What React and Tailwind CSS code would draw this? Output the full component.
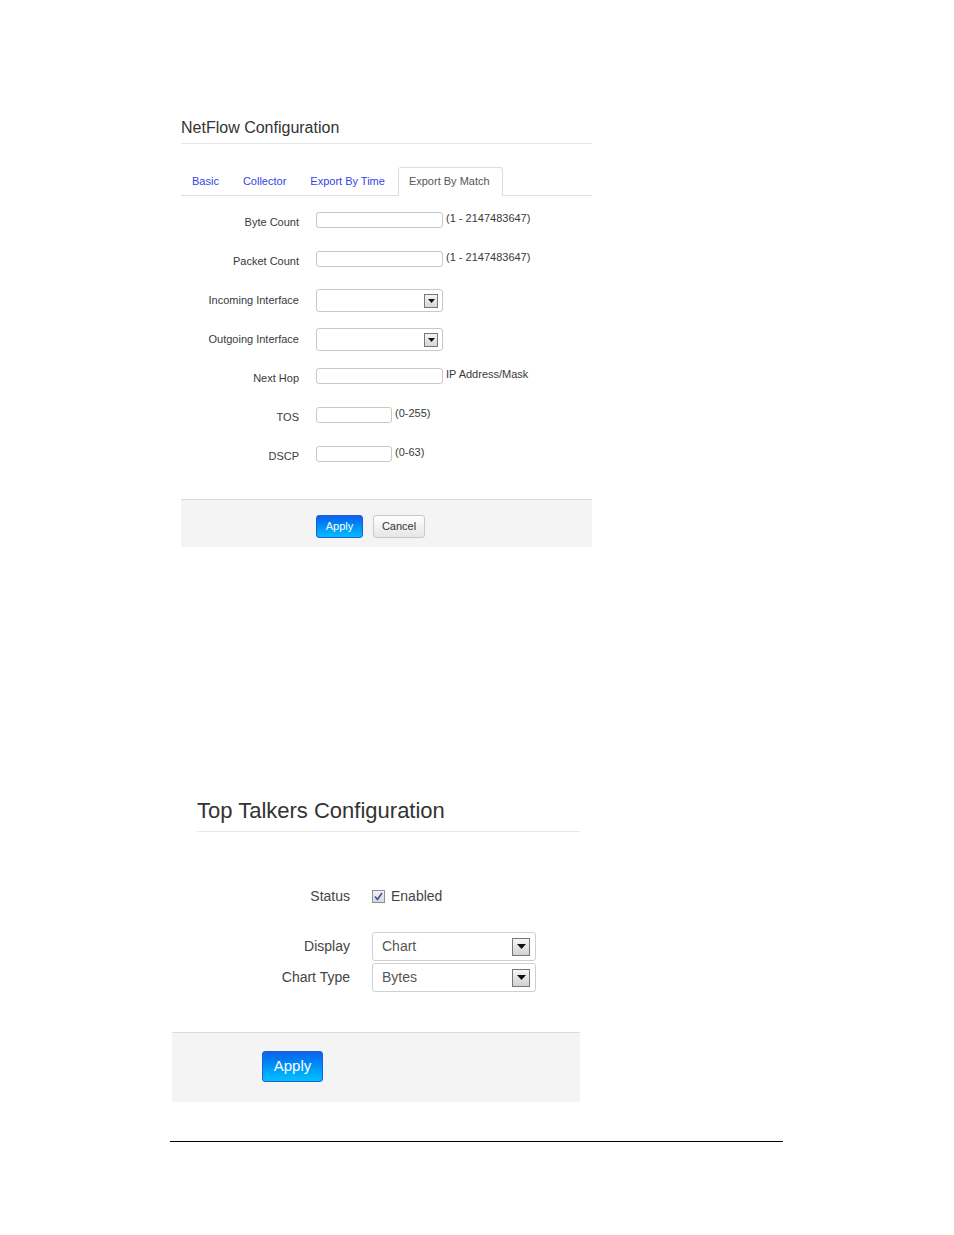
import React from "react";

const font = { fontFamily: '"Liberation Sans", Arial, Helvetica, sans-serif' };

function SmallArrow({ cls }) {
  return (
    <div className={cls}>
      <svg width="7" height="4" viewBox="0 0 7 4">
        <path d="M0 0 L7 0 L3.5 4 Z" fill="#111" />
      </svg>
    </div>
  );
}

function Row({ label, children }) {
  return (
    <div className="flex h-[39px] items-start">
      <div className="w-[118px] shrink-0 text-right text-[11px] leading-[16px] text-[#3a3a3a] mt-[4px]">{label}</div>
      <div className="ml-[17px] flex items-start">{children}</div>
    </div>
  );
}

function TextInput({ wide = true }) {
  return (
    <div
      className={
        wide
          ? "mt-[2px] h-[16px] w-[127px] rounded-[3px] border border-[#c8c8c8] bg-white"
          : "mt-[2px] h-[16px] w-[76px] rounded-[3px] border border-[#c8c8c8] bg-white"
      }
    />
  );
}

function Hint({ children }) {
  return <div className="ml-[3px] text-[11px] leading-[16px] text-[#3a3a3a]">{children}</div>;
}

function SmallSelect() {
  return (
    <div className="mt-[1px] flex h-[23px] w-[127px] items-center justify-end rounded-[3px] border border-[#c8c8c8] bg-white pr-[4px]">
      <SmallArrow cls="flex h-[14px] w-[14px] items-center justify-center border border-[#777] bg-gradient-to-b from-[#f4f4f4] to-[#d6d6d6]" />
    </div>
  );
}

function BigSelect({ value }) {
  return (
    <div className="flex h-[29px] w-[164px] items-center justify-between rounded-[3px] border border-[#cfcfcf] bg-white pl-[9px] pr-[5px]">
      <span className="text-[14px] text-[#555]">{value}</span>
      <div className="flex h-[18px] w-[18px] items-center justify-center border border-[#777] bg-gradient-to-b from-[#f6f6f6] to-[#d2d2d2]">
        <svg width="9" height="5" viewBox="0 0 9 5">
          <path d="M0 0 L9 0 L4.5 5 Z" fill="#111" />
        </svg>
      </div>
    </div>
  );
}

export default function App() {
  return (
    <div className="min-h-[1235px] w-[954px] bg-white" style={font}>
      {/* NetFlow section */}
      <div className="ml-[181px] w-[411px] pt-[118px]">
        <div className="border-b border-[#e6e6e6] pb-[5px] text-[16px] leading-[20px] text-[#333]">
          NetFlow Configuration
        </div>
        <div className="mt-[23px] flex h-[29px] items-end border-b border-[#ddd] text-[11px]">
          <div className="mr-[2px] flex h-[28px] items-center px-[11px] text-[#2f46e4]">Basic</div>
          <div className="mr-[2px] flex h-[28px] items-center px-[11px] text-[#2f46e4]">Collector</div>
          <div className="mr-[2px] flex h-[28px] items-center px-[11px] text-[#2f46e4]">Export By Time</div>
          <div className="-mb-px flex h-[29px] items-center rounded-t-[3px] border border-b-white border-[#ddd] bg-white pl-[10px] pr-[12px] text-[#555]">
            Export By Match
          </div>
        </div>

        <div className="mt-[14px]">
          <Row label="Byte Count">
            <TextInput />
            <Hint>(1 - 2147483647)</Hint>
          </Row>
          <Row label="Packet Count">
            <TextInput />
            <Hint>(1 - 2147483647)</Hint>
          </Row>
          <Row label="Incoming Interface">
            <SmallSelect />
          </Row>
          <Row label="Outgoing Interface">
            <SmallSelect />
          </Row>
          <Row label="Next Hop">
            <TextInput />
            <Hint>IP Address/Mask</Hint>
          </Row>
          <Row label="TOS">
            <TextInput wide={false} />
            <Hint>(0-255)</Hint>
          </Row>
          <Row label="DSCP">
            <TextInput wide={false} />
            <Hint>(0-63)</Hint>
          </Row>
        </div>

        <div className="mt-[16px] flex h-[48px] items-start border-t border-[#dcdcdc] bg-[#f4f4f4] pl-[135px] pt-[15px]">
          <button className="h-[23px] w-[47px] rounded-[3px] border border-[#1f5ed8] bg-gradient-to-b from-[#1160ec] to-[#00bdfd] text-[11px] text-white">
            Apply
          </button>
          <button className="ml-[10px] h-[23px] w-[52px] rounded-[3px] border border-[#c8c8c8] bg-gradient-to-b from-white to-[#e6e6e6] text-[11px] text-[#333]">
            Cancel
          </button>
        </div>
      </div>

      {/* Top Talkers section */}
      <div className="ml-[197px] mt-[250px] w-[383px] border-b border-[#e8e8e8] pb-[6px] text-[22px] leading-[28px] text-[#333]">
        Top Talkers Configuration
      </div>

      <div className="ml-[172px] w-[408px]">
        <div className="mt-[54px] flex h-[20px] items-center">
          <div className="w-[178px] text-right text-[14px] text-[#444]">Status</div>
          <div className="ml-[22px] flex items-center">
            <div className="flex h-[13px] w-[13px] items-center justify-center border border-[#8e8f8f] bg-gradient-to-b from-[#f2f2f2] to-[#d8d8d8]">
              <svg width="9" height="9" viewBox="0 0 9 9">
                <path d="M1 4.5 L3.5 7.5 L8 1" fill="none" stroke="#3a4fa0" strokeWidth="1.6" />
              </svg>
            </div>
            <span className="ml-[6px] text-[14px] text-[#444]">Enabled</span>
          </div>
        </div>

        <div className="mt-[26px] flex h-[29px] items-center">
          <div className="w-[178px] text-right text-[14px] text-[#444]">Display</div>
          <div className="ml-[22px]">
            <BigSelect value="Chart" />
          </div>
        </div>
        <div className="mt-[2px] flex h-[29px] items-center">
          <div className="w-[178px] text-right text-[14px] text-[#444]">Chart Type</div>
          <div className="ml-[22px]">
            <BigSelect value="Bytes" />
          </div>
        </div>

        <div className="mt-[40px] flex h-[70px] items-start border-t border-[#dcdcdc] bg-[#f4f4f4] pl-[90px] pt-[18px]">
          <button className="h-[31px] w-[61px] rounded-[3px] border border-[#1f5ed8] bg-gradient-to-b from-[#1160ec] to-[#00c2ff] text-[15px] text-white">
            Apply
          </button>
        </div>
      </div>

      <div className="ml-[170px] mt-[39px] h-px w-[613px] bg-black" />
    </div>
  );
}
